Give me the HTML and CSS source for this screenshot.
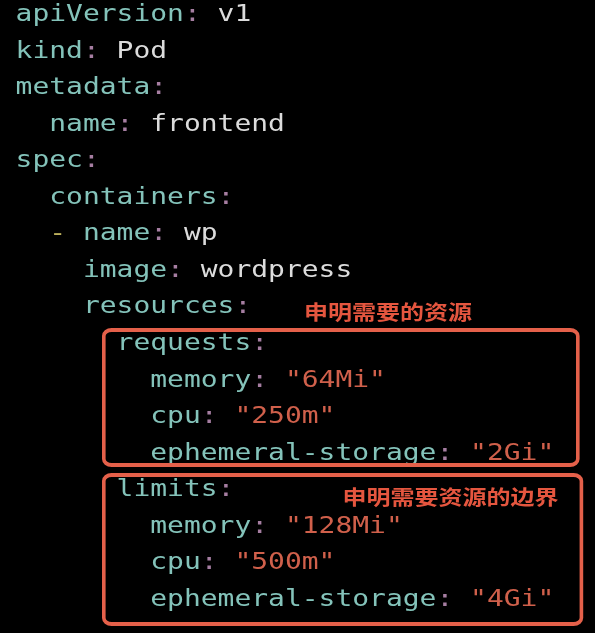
FILE: index.html
```html
<!DOCTYPE html>
<html lang="zh">
<head>
<meta charset="utf-8">
<title>Pod YAML</title>
<link rel="stylesheet" href="styles.css">
</head>
<body>
<div class="screen">
  <div class="code">
    <div class="line"><span class="k">apiVersion</span><span class="c">:</span> <span class="v">v1</span></div>
    <div class="line"><span class="k">kind</span><span class="c">:</span> <span class="v">Pod</span></div>
    <div class="line"><span class="k">metadata</span><span class="c">:</span></div>
    <div class="line">  <span class="k">name</span><span class="c">:</span> <span class="v">frontend</span></div>
    <div class="line"><span class="k">spec</span><span class="c">:</span></div>
    <div class="line">  <span class="k">containers</span><span class="c">:</span></div>
    <div class="line">  <span class="d">-</span> <span class="k">name</span><span class="c">:</span> <span class="v">wp</span></div>
    <div class="line">    <span class="k">image</span><span class="c">:</span> <span class="v">wordpress</span></div>
    <div class="line">    <span class="k">resources</span><span class="c">:</span><span class="note note-req">申明需要的资源</span></div>
    <div class="block block-req">
      <div class="line">      <span class="k">requests</span><span class="c">:</span></div>
      <div class="line">        <span class="k">memory</span><span class="c">:</span> <span class="s">"64Mi"</span></div>
      <div class="line">        <span class="k">cpu</span><span class="c">:</span> <span class="s">"250m"</span></div>
      <div class="line">        <span class="k">ephemeral-storage</span><span class="c">:</span> <span class="s">"2Gi"</span></div>
    </div>
    <div class="block block-lim">
      <div class="line">      <span class="k">limits</span><span class="c">:</span><span class="note note-lim">申明需要资源的边界</span></div>
      <div class="line">        <span class="k">memory</span><span class="c">:</span> <span class="s">"128Mi"</span></div>
      <div class="line">        <span class="k">cpu</span><span class="c">:</span> <span class="s">"500m"</span></div>
      <div class="line">        <span class="k">ephemeral-storage</span><span class="c">:</span> <span class="s">"4Gi"</span></div>
    </div>
  </div>
</div>
</body>
</html>
```
FILE: styles.css
```css
html, body {
  margin: 0;
  padding: 0;
  background: #000;
  overflow: hidden;
}

body {
  width: 595px;
  height: 633px;
}

.screen {
  width: 495.83px;
  transform: scaleX(1.2);
  transform-origin: left top;
  filter: blur(0.35px);
}

.code {
  margin-top: -4.9px;
  padding-left: 13px;
  font-family: "DejaVu Sans Mono", "Liberation Mono", monospace;
  font-size: 23.3px;
  line-height: 36.55px;
  color: #dcdcdc;
}

.line {
  white-space: pre;
  height: 36.55px;
}

.k { color: #84c3ba; }
.c { color: #a67ea2; }
.v { color: #dcdcdc; }
.s { color: #d0604b; }
.d { color: #bdb15c; }

.note {
  position: relative;
  font-family: "Noto Sans CJK SC", "Noto Sans", sans-serif;
  font-size: 20px;
  line-height: 1;
  font-weight: 700;
  color: #e5563f;
}

.note-req {
  margin-left: 44px;
  top: 7px;
}

.note-lim {
  margin-left: 90px;
  top: 8.5px;
}

.block {
  position: relative;
  margin-left: -13px;
  padding-left: 13px;
}

.block::after {
  content: "";
  position: absolute;
  border: 4px solid #e4604a;
  border-left-width: 3.5px;
  border-right-width: 3.5px;
  border-radius: 8px;
  pointer-events: none;
}

.block-req::after {
  top: 3.95px;
  bottom: 3.25px;
  left: 85px;
  right: 12.5px;
}

.block-lim::after {
  top: 2.75px;
  bottom: -9.55px;
  left: 85.4px;
  right: 10px;
}
```
